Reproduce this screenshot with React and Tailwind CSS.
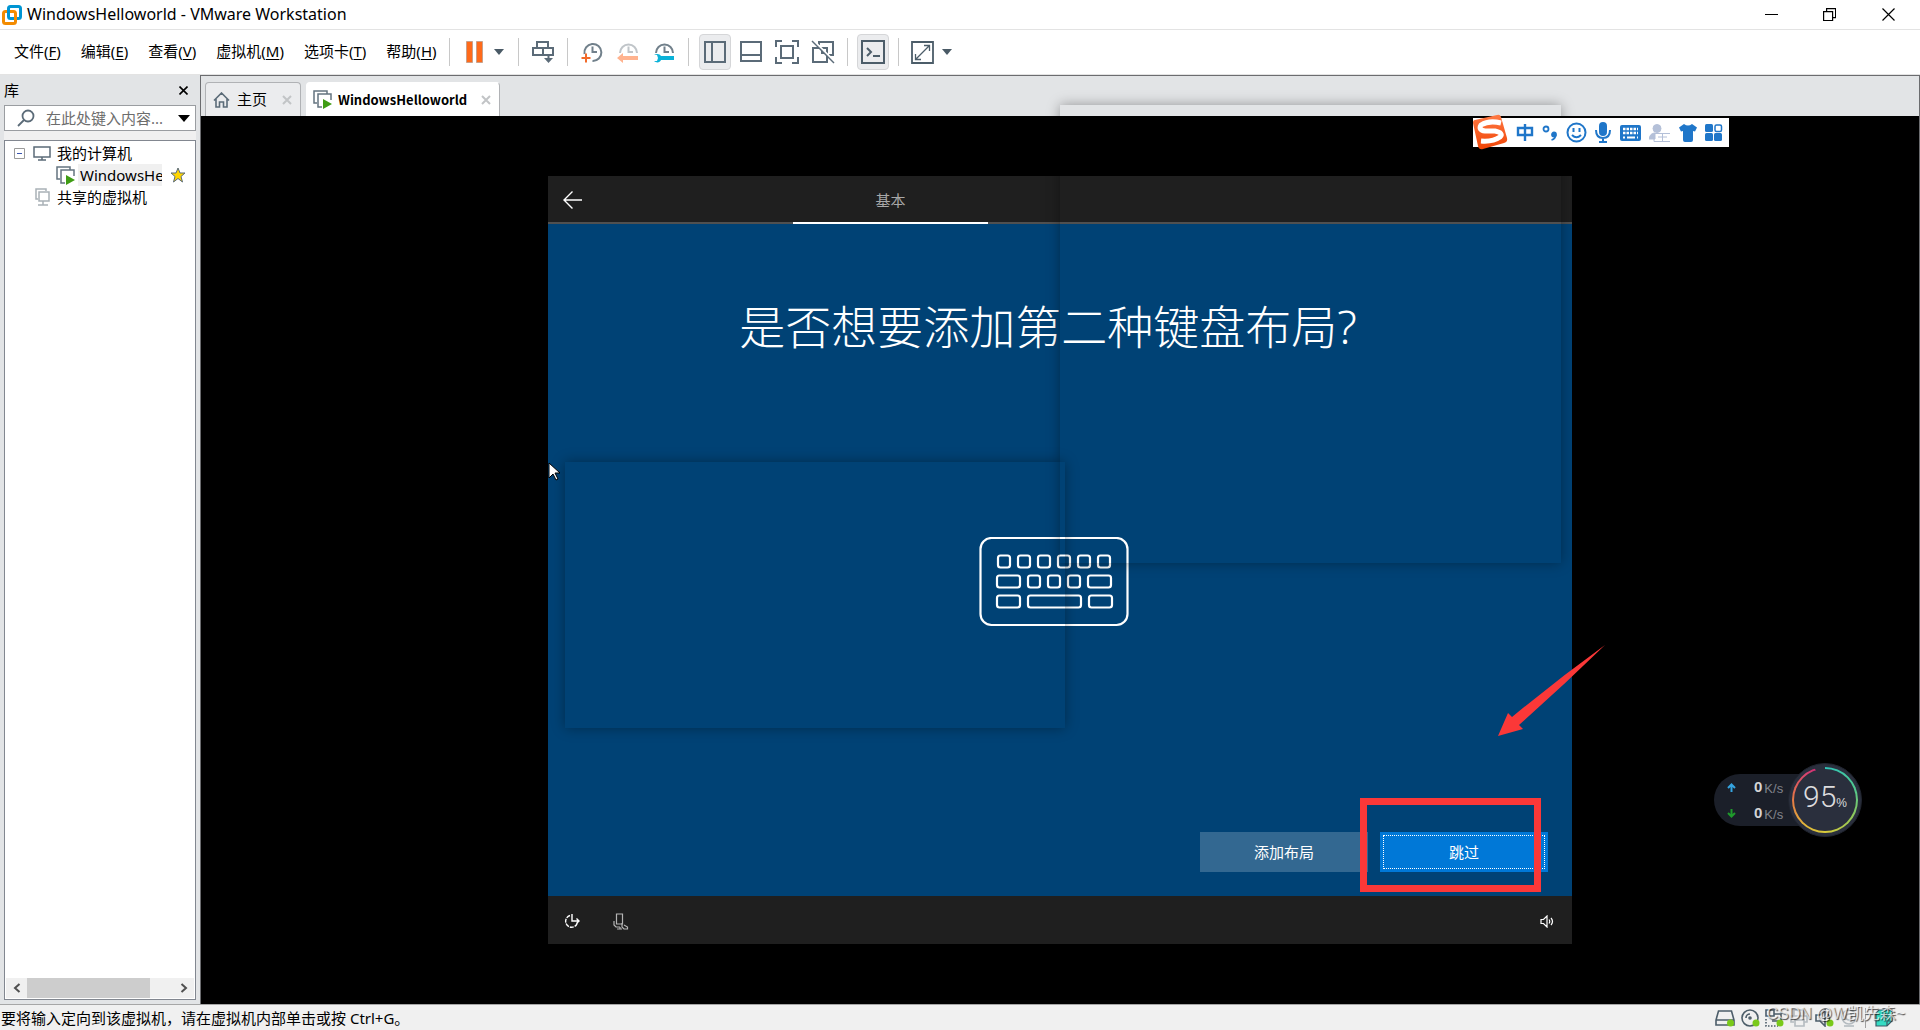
const menus = [
    { name: "文件", key: "F" },
    { name: "编辑", key: "E" },
    { name: "查看", key: "V" },
    { name: "虚拟机", key: "M" },
    { name: "选项卡", key: "T" },
    { name: "帮助", key: "H" },
];

const Icon = ({ w = 22, h = 22, stroke = "#5b6b78", sw = 2, className = "", children }) => (
    <svg width={w} height={h} viewBox={`0 0 ${w} ${h}`} fill="none" stroke={stroke} strokeWidth={sw} className={`shrink-0 ${className}`} aria-hidden="true">
        {children}
    </svg>
);

const Caret = () => (
    <Icon w={10} h={6} stroke="none">
        <path d="M0 0h10L5 6z" fill="#4a5a66" />
    </Icon>
);

const Separator = () => <div className="h-7 w-px bg-[#c8c8c8]" />;

const ToolButton = ({ label, active, children }) => (
    <button
        type="button"
        aria-label={label}
        className={`flex h-9 w-8 shrink-0 items-center justify-center rounded border ${active ? "border-[#d5d6d8] bg-[#ebecee]" : "border-transparent"}`}
    >
        {children}
    </button>
);

const VmIcon = () => (
    <Icon w={19} h={19} stroke="#647480" sw={1.5}>
        <path d="M4 13H1V1h13v3" />
        <path d="M9 17H5V4h13v6" />
        <path d="M10 9l9 5-9 5z" fill="#3f9c14" stroke="none" />
    </Icon>
);

const TitleBar = () => (
    <header className="flex h-[29px] shrink-0 items-center bg-white pr-0.5">
        <Icon w={22} h={22} sw={3} className="ml-px">
            <rect x="7.5" y="2.5" width="12" height="12" rx="2" stroke="#0095d3" />
            <rect x="2.5" y="7.5" width="12" height="12" rx="2" stroke="#f38b00" />
            <path d="M7.5 10V5" stroke="#0095d3" />
        </Icon>
        <h1 className="ml-1 pb-px text-[16px] leading-5 text-black">WindowsHelloworld - VMware Workstation</h1>
        <div className="ml-auto flex h-full">
            <button type="button" aria-label="最小化" className="flex w-[58px] items-center justify-center">
                <Icon w={13} h={13} stroke="#000" sw={1}><path d="M0 6.5h13" /></Icon>
            </button>
            <button type="button" aria-label="还原" className="flex w-[58px] items-center justify-center">
                <Icon w={13} h={13} stroke="#000" sw={1.2}><path d="M.6 3.6h9v9h-9zM3.6 3.6v-3h9v9h-3" /></Icon>
            </button>
            <button type="button" aria-label="关闭" className="flex w-[60px] items-center justify-center">
                <Icon w={13} h={13} stroke="#000" sw={1.2}><path d="M.5.5l12 12M12.5.5l-12 12" /></Icon>
            </button>
        </div>
    </header>
);

const Toolbar = () => (
    <div className="flex h-[46px] shrink-0 items-center border-y border-[#e3e3e3] bg-white">
        <nav className="flex items-center gap-5 pb-0.5 pl-3.5">
            {menus.map((m) => (
                <button key={m.key} type="button" className="text-[15px] leading-5 whitespace-nowrap text-black">
                    {m.name}(<span className="underline underline-offset-2">{m.key}</span>)
                </button>
            ))}
        </nav>
        <div className="ml-3 flex items-center">
            <Separator />
            <button type="button" aria-label="挂起" className="ml-4 flex items-center gap-2.5">
                <Icon w={18} h={22} stroke="#c9a08a" sw={1}>
                    <path d="M.5.5h6v21h-6zM10.500.5h6v21h-6z" fill="#ff6a1a" />
                </Icon>
                <Caret />
            </button>
            <div className="ml-3.5"><Separator /></div>
            <div className="mx-2 flex">
                <ToolButton label="发送 Ctrl+Alt+Del">
                    <Icon>
                        <path d="M5 7V1h11v6M1 7h20v7H1zM11 7v7" />
                        <path d="M16.500 14v5" />
                        <path d="M12 17h9l-4.500 5z" fill="#5b6b78" stroke="none" />
                    </Icon>
                </ToolButton>
            </div>
            <Separator />
            <div className="mx-2 flex gap-1">
                <ToolButton label="拍摄快照">
                    <Icon stroke="#71808b">
                        <path d="M3.500 13a8.500 8.500 0 1 1 8 7M11.500 5.500V11H16" />
                        <path d="M5 12.500v9M.5 17h9" stroke="#f26a2a" />
                    </Icon>
                </ToolButton>
                <ToolButton label="恢复快照">
                    <Icon>
                        <path d="M3 12a8.500 8.500 0 0 1 17 0M11.500 5.500V11H16" stroke="#c0c5c9" />
                        <path d="M0 17l6-5v3h15v4H6v3z" fill="#ffb38f" stroke="none" />
                    </Icon>
                </ToolButton>
                <ToolButton label="管理快照">
                    <Icon>
                        <path d="M3 12a8.500 8.500 0 0 1 17 0M11.500 5.500V11H16" stroke="#71808b" />
                        <path d="M1 14c3-2 6-1 7 1h13v4H8c-1 3-5 3-7 1h3l1-3-1-3z" fill="#0bb2d8" stroke="none" />
                    </Icon>
                </ToolButton>
            </div>
            <Separator />
            <div className="mr-2 ml-2.5 flex gap-1">
                <ToolButton label="显示库" active>
                    <Icon><path d="M1 1h20v20H1zM8 1v20" /></Icon>
                </ToolButton>
                <ToolButton label="缩略图栏">
                    <Icon><path d="M1 1h20v19H1zM1 14h20" /></Icon>
                </ToolButton>
                <ToolButton label="全屏">
                    <Icon w={24} h={24}><path d="M1 7V1h6M17 1h6v6M23 17v6h-6M7 23H1v-6M6 6h12v12H6z" /></Icon>
                </ToolButton>
                <ToolButton label="Unity">
                    <Icon w={24} h={24}>
                        <path d="M8 5V2h14v13h-4M2 8h14v14H2z" />
                        <path d="M11 8v5h5" />
                        <path d="M2 0l22 22" stroke="#fff" />
                        <path d="M1 1l22 22" strokeWidth="1.5" />
                    </Icon>
                </ToolButton>
            </div>
            <Separator />
            <div className="mx-[9px] flex">
                <ToolButton label="控制台视图" active>
                    <Icon w={24} h={24} stroke="#4c5d69"><path d="M1 1h22v22H1zM6 8l4 4-4 4M12 16h7" /></Icon>
                </ToolButton>
            </div>
            <Separator />
            <button type="button" aria-label="自由拉伸" className="ml-3 flex items-center gap-2">
                <Icon w={23} h={23} stroke="#4c5d69">
                    <path d="M1 1h21v21H1z" strokeWidth="1.800" />
                    <path d="M13 4.500h5.500V10M18.500 4.500l-14 14M4.500 13v5.500H10" strokeWidth="1.300" />
                </Icon>
                <Caret />
            </button>
        </div>
    </div>
);

const Library = () => (
    <aside className="flex w-[200px] shrink-0 flex-col bg-[#e2e4e6] pr-1 pb-1 pl-1">
        <div className="flex h-[30px] items-center justify-between">
            <h2 className="text-[15px] leading-5 text-black">库</h2>
            <button type="button" aria-label="关闭库" className="mr-2">
                <Icon w={9} h={9} stroke="#000" sw={1.6}><path d="M.5.5l8 8M8.500.5l-8 8" /></Icon>
            </button>
        </div>
        <div className="flex h-[26px] items-center border border-[#9a9da1] bg-white pr-[5px] pl-3">
            <Icon w={18} h={18} stroke="#5b6b78" sw={1.8}>
                <circle cx="11" cy="7" r="5.500" />
                <path d="M7 11l-6 6" />
            </Icon>
            <input type="text" aria-label="搜索" placeholder="在此处键入内容..." className="ml-[11px] min-w-0 flex-1 text-[15px] leading-5 outline-none placeholder:text-[#6d6d6d]" />
            <Icon w={12} h={7} stroke="none"><path d="M0 0h12L6 7z" fill="#000" /></Icon>
        </div>
        <div className="h-[9px] bg-[#f0f0f0]" />
        <div className="flex min-h-0 flex-1 flex-col justify-between border border-[#828790] bg-white p-px">
            <ul className="text-[15px] leading-[22px] text-black">
                <li className="flex items-center pl-2">
                    <Icon w={11} h={11} stroke="#9a9a9a" sw={1}>
                        <path d="M.5.5h10v10H.5z" />
                        <path d="M3 5.500h5" stroke="#3a55b0" />
                    </Icon>
                    <Icon w={18} h={15} stroke="#5b6b78" sw={1.5} className="mr-1.5 ml-2">
                        <path d="M1 1h16v10H1zM9 11v3M5 14h8" />
                    </Icon>
                    我的计算机
                </li>
                <li className="flex items-center pl-[50px]">
                    <VmIcon />
                    <span className="ml-[3px] w-[84px] overflow-hidden bg-[#f0f0f0] pl-0.5">WindowsHelloworld</span>
                    <Icon w={16} h={16} stroke="#5b6b78" sw={1} className="ml-2">
                        <path d="M8 1l2 5h5l-4 3.500L12.500 15 8 11.500 3.500 15 5 9.500 1 6h5z" fill="#ffd500" />
                    </Icon>
                </li>
                <li className="flex items-center pl-[29px]">
                    <Icon w={15} h={18} stroke="#a9b1b7" sw={1.5} className="mr-[7px]">
                        <path d="M3 11H1V1h10v2M4 4h10v9H4zM8 13v4M3 17h10" />
                    </Icon>
                    共享的虚拟机
                </li>
            </ul>
            <div className="flex h-5 items-stretch bg-[#f0f0f0]">
                <button type="button" aria-label="向左滚动" className="flex w-[21px] items-center justify-center">
                    <Icon w={8} h={10} stroke="#505050"><path d="M6.500 1l-4.500 4 4.500 4" /></Icon>
                </button>
                <div className="w-[123px] bg-[#cdcdcd]" />
                <button type="button" aria-label="向右滚动" className="ml-auto flex w-[21px] items-center justify-center">
                    <Icon w={8} h={10} stroke="#505050"><path d="M1.500 1L6 5 1.500 9" /></Icon>
                </button>
            </div>
        </div>
    </aside>
);

const TabClose = ({ label }) => (
    <button type="button" aria-label={label}>
        <Icon w={10} h={10} stroke="#c2c4c6"><path d="M1 1l8 8M9 1L1 9" /></Icon>
    </button>
);

const TabBar = () => (
    <div className="flex h-10 shrink-0 items-end gap-[5px] bg-[#e2e4e6] pl-1">
        <div className="flex h-[34px] w-24 items-center rounded-t border border-b-0 border-[#b0b2b5] bg-[#ebecee] pr-2 pl-[7px]">
            <Icon w={17} h={16} stroke="#5b6b78" sw={1.6}>
                <path d="M1 8.500L8.500 1 16 8.500M3 7v8h3.500v-5h4v5H14V7" />
            </Icon>
            <a href="#home" className="mr-auto ml-[7px] pb-0.5 text-[15px] leading-5 text-black">主页</a>
            <TabClose label="关闭主页" />
        </div>
        <div className="flex h-[34px] items-center gap-1.5 rounded-t border border-b-0 border-t-white border-r-[#b0b2b5] border-l-white bg-white pr-2 pl-1.5">
            <VmIcon />
            <a href="#vm" className="mr-2 font-['Noto_Sans_CJK_SC',sans-serif] text-[13px] leading-5 font-bold text-black">WindowsHelloworld</a>
            <TabClose label="关闭 WindowsHelloworld" />
        </div>
    </div>
);

const KeyboardArt = () => (
    <svg width="150" height="90" viewBox="0 0 150 90" fill="none" stroke="#fff" strokeWidth="2.200" aria-hidden="true">
        <rect x="1.500" y="1" width="147" height="87" rx="11" />
        {[19, 39, 59, 79, 99, 119].map((x) => <rect key={x} x={x} y="18.500" width="12" height="12" rx="2.500" />)}
        {[49, 69, 89].map((x) => <rect key={x} x={x} y="38.500" width="12" height="12" rx="2.500" />)}
        <rect x="18" y="38.500" width="23" height="12" rx="2.500" />
        <rect x="109" y="38.500" width="23" height="12" rx="2.500" />
        <rect x="18" y="58.500" width="23" height="12" rx="2.500" />
        <rect x="49" y="58.500" width="53" height="12" rx="2.500" />
        <rect x="110" y="58.500" width="23" height="12" rx="2.500" />
    </svg>
);

const SetupScreen = () => (
    <section className="relative flex h-[768px] w-[1024px] shrink-0 flex-col bg-[#004275] text-white">
        <div className="flex h-12 items-stretch border-b-2 border-[#505050] bg-[#1f1f1f]">
            <button type="button" aria-label="返回" className="flex w-[245px] items-center pt-px pl-[15px]">
                <Icon w={19} h={18} stroke="#fff" sw={1.4}><path d="M19 9H1M9.500.5L1 9l8.500 8.500" /></Icon>
            </button>
            <div className="-mb-0.5 flex w-[195px] items-center justify-center border-b-2 border-white pt-0.5 text-[15px] leading-5 text-[#a8a8a8]">基本</div>
        </div>
        <div className="flex flex-1 flex-col items-center">
            <h2 className="mt-[69px] mr-6 text-[46px] leading-[66px] font-light">是否想要添加第二种键盘布局?</h2>
            <div className="mt-[178px] mr-3"><KeyboardArt /></div>
            <div className="mt-auto mr-6 mb-6 flex gap-3 self-end">
                <button type="button" className="h-10 w-[168px] bg-[#336891] text-[15px] leading-5">添加布局</button>
                <button type="button" className="flex h-10 w-[168px] bg-[#0078d7] p-[3px] text-[15px] leading-5">
                    <span className="flex h-full w-full items-center justify-center border border-dotted border-white">跳过</span>
                </button>
            </div>
        </div>
        <div className="flex h-12 items-center bg-[#1f1f1f] px-4 pt-0.5">
            <button type="button" aria-label="轻松使用">
                <Icon w={17} h={15} stroke="#fff" sw={1.4}>
                    <path d="M6 1.500a6 6 0 1 0 7.500 7" strokeDasharray="4 1" />
                    <path d="M8 0v7h7M12.500 4.500L15 7l-2.500 2.500" />
                </Icon>
            </button>
            <button type="button" aria-label="麦克风" className="ml-8">
                <Icon w={16} h={17} stroke="#b5b5b5" sw={1.2}>
                    <path d="M3.500 1h6v10h-6zM1 8v4l2 2h4M7 14v2M4 16h5" />
                    <path d="M9 10v4l2 2h3.500v-2L11 12" />
                </Icon>
            </button>
            <button type="button" aria-label="音量" className="ml-auto">
                <Icon w={16} h={13} stroke="#fff" sw={1.2}>
                    <path d="M1 4.500h2.500L7 1v11L3.500 8.500H1zM9 4.500q1.500 2 0 4M11 3q3 3.500 0 7" />
                </Icon>
            </button>
        </div>

        {/* mouse pointer */}
        <svg width="14" height="20" viewBox="0 0 14 20" className="absolute top-[286px] left-0" aria-hidden="true">
            <path d="M1 1v15l4-4 3 6 2-1-3-6h5z" fill="#fff" stroke="#000" />
        </svg>
    </section>
);

const InputMethodBar = () => (
    <div className="absolute top-[42px] right-[190px] flex h-[29px] w-[256px] items-center justify-between bg-white pr-1.5 pl-[43px]">
        <svg width="37" height="36" viewBox="0 0 37 36" className="absolute -top-1 -left-px" aria-hidden="true">
            <defs>
                <linearGradient id="sogou" x1="0" y1="0" x2="0" y2="1">
                    <stop offset="0" stopColor="#ff7a45" />
                    <stop offset="1" stopColor="#f04405" />
                </linearGradient>
            </defs>
            <path d="M3 6L25 1q3-1 4 2l6 21q1 4-3 5L11 35q-4 1-5-3L1 9q0-3 2-3z" fill="url(#sogou)" />
            <path d="M29 9Q17 6 9 11q-3 5 4 6 4 0 10 0 9 2 5 6-7 5-19 4" fill="none" stroke="#fff" strokeWidth="5" />
        </svg>
        <Icon w={18} h={19} stroke="#1f76c9" sw={2.4}><path d="M2 5h14v7H2zM9 1v17" /></Icon>
        <Icon w={15} h={16} stroke="#1f76c9" sw={1.8}>
            <circle cx="4" cy="4" r="2.500" />
            <circle cx="12" cy="9.500" r="2" fill="#1f76c9" />
            <path d="M13.500 10q0 4-4 5" />
        </Icon>
        <Icon w={21} h={21} stroke="#1f76c9">
            <circle cx="10.500" cy="10.500" r="9" />
            <path d="M7.500 6v4M13.500 6v4M6 13q4.500 4.500 9 0" />
        </Icon>
        <Icon w={16} h={21} stroke="#1f76c9">
            <rect x="5" y="1" width="6" height="12" rx="3" fill="#1f76c9" />
            <path d="M1 8q0 8 7 8t7-8M8 16v4M4 20h8" />
        </Icon>
        <Icon w={21} h={16} stroke="none">
            <rect width="21" height="16" rx="2" fill="#1f76c9" />
            <path d="M3 4h15M3 8h15" stroke="#fff" strokeWidth="2.500" strokeDasharray="2.500 1" />
            <path d="M3 12.500h2M7 12.500h8M17 12.500h1" stroke="#fff" strokeWidth="2" />
        </Icon>
        <Icon w={21} h={18} stroke="#b4c0d8" sw={1}>
            <circle cx="8" cy="4.500" r="4" fill="#b4c0d8" />
            <path d="M0 15q1-6 6-6v6z" fill="#b4c0d8" />
            <path d="M5 9.500h16M9 13h9M5 17.500h16M5 9.500v8M13.500 9.500v8" />
        </Icon>
        <Icon w={18} h={18} stroke="none">
            <path d="M5 0q4 3 8 0l5 3.500-2 4-2-.5v9q0 2-2 2H6q-2 0-2-2V7l-2 .5-2-4z" fill="#1f76c9" />
        </Icon>
        <Icon w={18} h={18} stroke="none">
            <rect width="8" height="8" rx="1.500" fill="#1f76c9" />
            <rect y="9" width="8" height="8" rx="1.500" fill="#1f76c9" />
            <rect x="9" y="9" width="8" height="8" rx="1.500" fill="#1f76c9" />
            <rect x="10" y="1" width="6.500" height="6.500" rx="1.500" fill="none" stroke="#1f76c9" strokeWidth="1.500" />
        </Icon>
    </div>
);

const SpeedRow = ({ color, path }) => (
    <div className="flex h-[26px] items-center pl-[13px]">
        <Icon w={9} h={9} stroke={color}><path d={path} /></Icon>
        <span className="ml-[18px] text-[15px] leading-5 font-bold text-[#d4d4d6]">0</span>
        <span className="ml-0.5 pt-1 text-[13px] leading-4 text-[#82848c]">K/s</span>
    </div>
);

const SpeedWidget = () => (
    <div className="absolute right-[57px] bottom-[167px] flex h-[74px] w-[148px] items-center font-['Liberation_Sans',sans-serif]">
        <div className="h-[52px] w-24 rounded-l-[26px] bg-[#1b1f29]">
            <SpeedRow color="#35a4e0" path="M4.500 9V1.500M1 5l3.500-3.500L8 5" />
            <SpeedRow color="#1f9a2c" path="M4.500 0v7.500M1 4l3.500 3.500L8 4" />
        </div>
        <div className="absolute right-0 flex size-[74px] items-center justify-center rounded-full border border-[#20242e] bg-[#2a2f3d]">
            <div className="flex size-[66px] items-center justify-center rounded-full bg-[conic-gradient(#2fc4b8_0deg,#52c98f_70deg,#8fc85a_120deg,#d9cb3a_180deg,#e2b53a_220deg,#e57a45_270deg,#d8436f_325deg,#cf2f74_342deg,#2a2f3d_343deg)]">
                <div className="flex size-[62px] items-baseline justify-center rounded-full bg-[#2a2f3d] pt-1.5 text-[#dcdcde]">
                    <span className="font-['Roboto',sans-serif] text-[30px] leading-[44px] font-light">95</span>
                    <span className="text-[12px]">%</span>
                </div>
            </div>
        </div>
    </div>
);

const Highlights = () => (
    <>
        {/* faint shadows left by windows stacked above the guest */}
        <div className="pointer-events-none absolute top-[29px] left-[859px] h-[458px] w-[501px] shadow-[0_0_12px_rgba(0,0,0,0.35)]" />
        <div className="pointer-events-none absolute top-[386px] left-[364px] h-[266px] w-[500px] shadow-[0_0_12px_rgba(0,0,0,0.35)]" />
        <div className="pointer-events-none absolute top-[722px] left-[1159px] h-[94px] w-[181px] border-[7px] border-[#fb3838]" />
        <svg width="108" height="92" viewBox="0 0 108 92" className="pointer-events-none absolute top-[568px] left-[1297px]" aria-hidden="true">
            <path d="M107 1Q60 35 14 73l-4-4L0 92l25-7-4-4Q65 42 107 1z" fill="#fb3838" />
        </svg>
    </>
);

const Workspace = () => (
    <main className="relative flex min-w-0 flex-1 flex-col border-t border-r border-l border-[#6b6c6f] bg-black">
        <TabBar />
        <div className="flex min-h-0 flex-1 items-center justify-center">
            <SetupScreen />
        </div>
        <Highlights />
        <InputMethodBar />
        <SpeedWidget />
    </main>
);

const GreenDot = ({ cx, cy }) => <circle cx={cx} cy={cy} r="3.500" fill="#7ac91a" stroke="none" />;

const StatusBar = () => (
    <footer className="relative flex h-[26px] shrink-0 items-center justify-between border-t border-[#a6a6a6] bg-[#f0f0f0] pr-[27px] pl-px">
        <p className="text-[15px] leading-5 text-black">要将输入定向到该虚拟机，请在虚拟机内部单击或按 Ctrl+G。</p>
        <div className="flex items-center gap-[5px]">
            <Icon w={20} h={18} stroke="#4c5d69" sw={1.6}>
                <path d="M3.500 2h13L19 11v5H1v-5zM1 11h18" />
                <GreenDot cx="15.500" cy="14" />
            </Icon>
            <Icon w={20} h={18} stroke="#4c5d69" sw={1.6}>
                <circle cx="10" cy="9" r="8" />
                <circle cx="10" cy="9" r="1" />
                <path d="M6 9a4 4 0 0 1 4-4" />
                <GreenDot cx="16" cy="14" />
            </Icon>
            <Icon w={20} h={18} stroke="#4c5d69" sw={1.6}>
                <path d="M1 1h8v6H1zM9 5h7v7H7" />
                <path d="M1 10v7h12" strokeDasharray="1.500 1.500" />
                <GreenDot cx="15" cy="14" />
            </Icon>
            <Icon w={20} h={18} stroke="#b4bbc0" sw={1.6}>
                <path d="M4 7V1h10v6M4 13H1V7h16v6h-3M5 11h9v6H5z" />
            </Icon>
            <Icon w={20} h={18} stroke="#4c5d69" sw={1.6}>
                <path d="M1 6h4l5-5v16l-5-5H1zM13 5q3 4 0 8" />
                <GreenDot cx="15" cy="14" />
            </Icon>
            <Icon w={20} h={18} stroke="#b4bbc0" sw={1.6}>
                <circle cx="9" cy="8" r="7" />
                <circle cx="9" cy="8" r="3" />
                <path d="M4 17h10" />
            </Icon>
            <div className="h-5 w-px bg-[#a0a0a0]" />
            <Icon w={18} h={18} stroke="#3b5a66" sw={1.2} className="ml-1">
                <path d="M4 1h13v11l-5 5H1V4z" fill="#35dcc4" />
                <path d="M12 17v-5h5M7 5h7M7 8h7" />
            </Icon>
        </div>
        <span className="absolute right-[15px] bottom-1.5 font-['Liberation_Sans','Noto_Sans_CJK_SC',sans-serif] text-[16px] leading-5 text-white/70 [text-shadow:1px_1px_1px_rgba(0,0,0,0.7)]">CSDN @W凯先森~</span>
    </footer>
);

const App = () => {
    return (
        <div className="flex h-screen flex-col overflow-hidden bg-[#e2e4e6] font-['Noto_Sans','Noto_Sans_CJK_SC',sans-serif]">
            <TitleBar />
            <Toolbar />
            <div className="flex min-h-0 flex-1">
                <Library />
                <Workspace />
            </div>
            <StatusBar />
        </div>
    );
};

export default App;
